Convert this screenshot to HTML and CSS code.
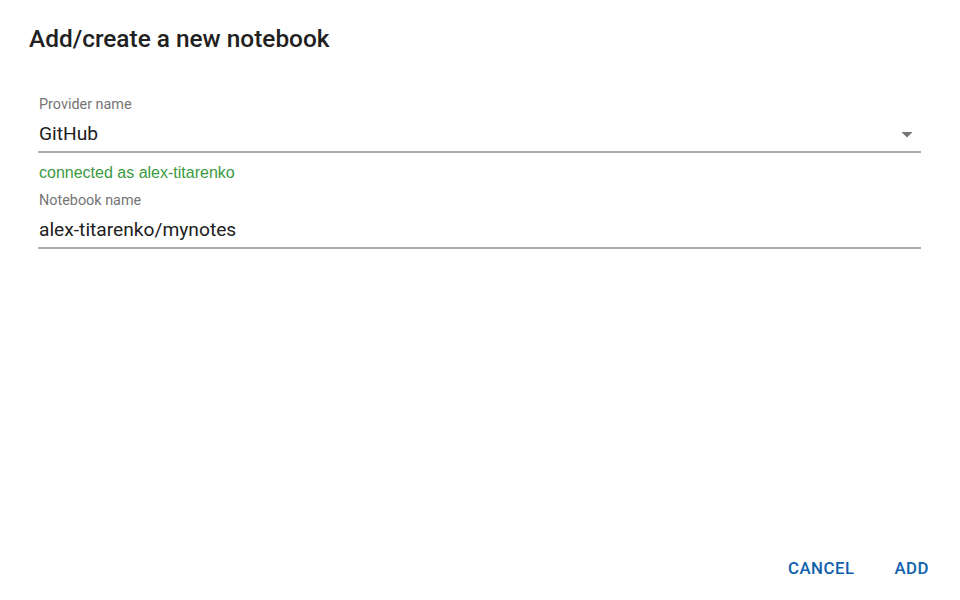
FILE: index.html
```html
<!DOCTYPE html>
<html>
<head>
<meta charset="utf-8">
<link rel="stylesheet" href="styles.css">
</head>
<body>
<div class="dialog">
  <h2 class="title">Add/create a new notebook</h2>
  <div class="content">
    <div class="field">
      <label class="label">Provider name</label>
      <div class="input select">
        <span class="value">GitHub</span>
        <svg class="arrow" width="24" height="24" viewBox="0 0 24 24"><path d="M6.5 10l5.5 5.5 5.5-5.5z" fill="#757575"/></svg>
      </div>
    </div>
    <div class="status">connected as alex-titarenko</div>
    <div class="field">
      <label class="label">Notebook name</label>
      <div class="input">
        <span class="value">alex-titarenko/mynotes</span>
      </div>
    </div>
  </div>
  <div class="actions">
    <button class="btn">Cancel</button>
    <button class="btn">Add</button>
  </div>
</div>
</body>
</html>
```
FILE: styles.css
```css
html, body {
  margin: 0;
  padding: 0;
  background: #fff;
}
body {
  font-family: Roboto, "Liberation Sans", sans-serif;
  color: #212121;
}
.dialog {
  width: 960px;
  height: 600px;
  box-sizing: border-box;
  display: flex;
  flex-direction: column;
}
.title {
  margin: 0;
  padding: 23px 29px 0;
  font-size: 24.4px;
  font-weight: 500;
  line-height: 32px;
  color: #212121;
}
.content {
  padding: 41px 39px 0 38px;
  flex: 1;
}
.field {
  display: flex;
  flex-direction: column;
}
.label {
  font-size: 14.4px;
  line-height: 17px;
  color: #757575;
  padding-left: 1px;
}
.input {
  display: flex;
  align-items: center;
  border-bottom: 2px solid #ababab;
  padding: 9px 0 5px 1px;
  height: 24px;
}
.value {
  flex: 1;
  font-size: 19.2px;
  line-height: 24px;
  color: #212121;
}
.arrow {
  margin-right: 2px;
}
.status {
  font-family: "Liberation Sans", Arial, sans-serif;
  font-size: 16px;
  line-height: 20px;
  color: #3b9a3f;
  padding: 10px 0 9px 1px;
}
.actions {
  display: flex;
  justify-content: flex-end;
  gap: 24px;
  padding: 0 23px 16px 0;
}
.btn {
  background: none;
  border: none;
  font-family: Roboto, sans-serif;
  font-weight: 500;
  font-size: 16.8px;
  text-transform: uppercase;
  letter-spacing: 0.5px;
  color: #1160ae;
  padding: 6px 8px;
  line-height: 20px;
}
```
